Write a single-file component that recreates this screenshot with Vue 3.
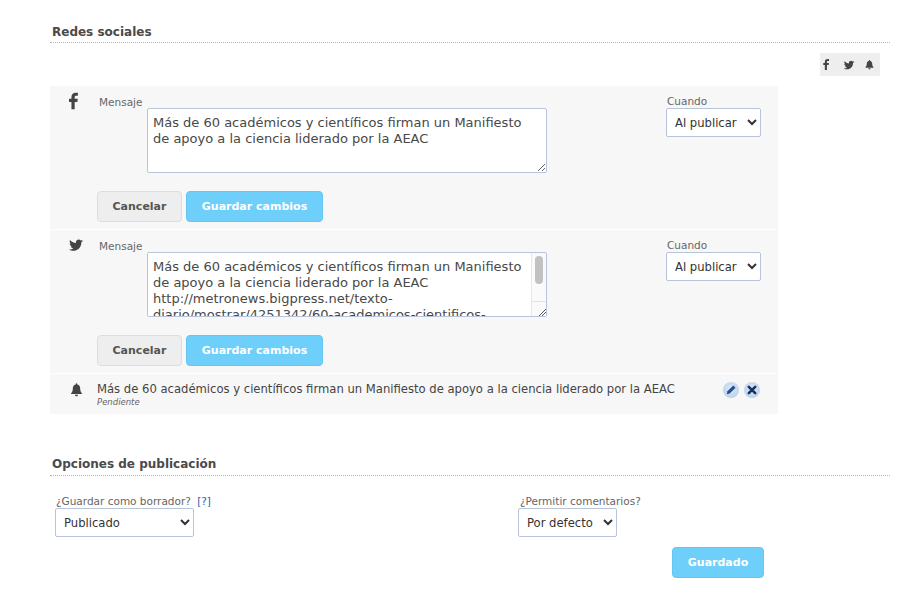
<script setup>
const msg1 = 'Más de 60 académicos y científicos firman un Manifiesto de apoyo a la ciencia liderado por la AEAC'
const msg2 = msg1 + ' http://metronews.bigpress.net/texto-diario/mostrar/4251342/60-academicos-cientificos-firman-manifiesto-apoyo-ciencia-liderado-aeac'
const rows = [
  { id: 'fb', text: msg1, scroll: false },
  { id: 'tw', text: msg2, scroll: true }
]
const fb = 'M10.6 1.5c-2.5 0-3.9 1.4-3.9 3.9V7H4.5v2.8h2.2v6.7h2.9V9.8h2.4l.4-2.8H9.6V5.6c0-.9.3-1.4 1.4-1.4h1.5V1.6c-.4 0-1.1-.1-1.9-.1z'
const tw = 'M17 4.3c-.6.3-1.2.4-1.9.5.7-.4 1.2-1 1.4-1.8-.6.4-1.3.6-2.1.8-.6-.6-1.4-1-2.3-1-1.8 0-3.2 1.4-3.2 3.2 0 .3 0 .5.1.7C6.3 6.6 3.9 5.3 2.3 3.400c-.3.5-.4 1-.4 1.600 0 1.100.6 2.100 1.400 2.700-.5 0-1-.2-1.400-.4 0 1.600 1.100 2.900 2.500 3.200-.3.100-.5.100-.8.100-.2 0-.4 0-.6-.1.4 1.300 1.600 2.200 3 2.200-1.100.9-2.500 1.400-4 1.400H1c1.400.9 3.100 1.400 4.900 1.400 5.900 0 9.100-4.900 9.100-9.100v-.4c.8-.5 1.500-1.200 2-2z'
const bell = 'M9 1.500c-.6 0-1 .4-1 1v.6C5.800 3.600 4.600 5.400 4.600 7.500c0 3.500-1 4.800-2.100 6v.9h13v-.9c-1.100-1.200-2.100-2.500-2.100-6 0-2.100-1.200-3.900-3.400-4.400v-.6c0-.6-.4-1-1-1zM7 15.200c0 1.100.9 1.800 2 1.800s2-.7 2-1.800H7z'
</script>

<template>
  <main class="page">
    <h2 class="heading">Redes sociales</h2>

    <div class="toggles">
      <span class="toggle t-fb"><svg viewBox="0 0 18 18" width="13" height="13"><path :d="fb" /></svg></span>
      <span class="toggle t-tw"><svg viewBox="0 0 18 18" width="12" height="12"><path :d="tw" /></svg></span>
      <span class="toggle t-bell"><svg viewBox="0 0 18 18" width="11" height="11"><path :d="bell" /></svg></span>
    </div>

    <section class="panel">
      <div v-for="r in rows" :key="r.id" class="row">
        <div class="net-icon" :class="r.id">
          <svg v-if="r.id === 'fb'" viewBox="0 0 18 18" width="20" height="20"><path :d="fb" /></svg>
          <svg v-else viewBox="0 0 18 18" width="16" height="16"><path :d="tw" /></svg>
        </div>
        <div class="form">
          <div class="msg-line">
            <label class="label msg-label">Mensaje</label>
            <div class="area-wrap">
              <textarea class="area" :class="{ scrolling: r.scroll }" :value="r.text"></textarea>
              <div v-if="r.scroll" class="fake-bar">
                <span class="fake-thumb"></span>
                <span class="fake-corner"></span>
              </div>
            </div>
          </div>
          <div class="actions">
            <button class="btn cancel">Cancelar</button>
            <button class="btn primary">Guardar cambios</button>
          </div>
        </div>
        <div class="when">
          <label class="label when-label">Cuando</label>
          <select class="select"><option>Al publicar</option></select>
        </div>
      </div>

      <div class="row pending">
        <div class="bell-icon"><svg viewBox="0 0 18 18" width="15" height="15"><path :d="bell" /></svg></div>
        <div class="pending-text">
          <div class="pending-msg">{{ msg1 }}</div>
          <div class="pending-state">Pendiente</div>
        </div>
        <div class="round-actions">
          <span class="round">
            <svg viewBox="0 0 16 16" width="16" height="16"><path d="M10.300 3.500l2.200 2.200-5.800 5.800-2.900.7.700-2.900z" fill="#1f4f8f" /></svg>
          </span>
          <span class="round">
            <svg viewBox="0 0 16 16" width="16" height="16"><path d="M4.800 4.800l6.400 6.400M11.200 4.800l-6.400 6.400" stroke="#16345f" stroke-width="2.600" stroke-linecap="round" /></svg>
          </span>
        </div>
      </div>
    </section>

    <h2 class="heading second">Opciones de publicación</h2>

    <div class="options">
      <div class="opt-left">
        <label class="label">¿Guardar como borrador? <a class="help">[?]</a></label>
        <select class="select wide"><option>Publicado</option></select>
      </div>
      <div class="opt-right">
        <label class="label">¿Permitir comentarios?</label>
        <select class="select"><option>Por defecto</option></select>
      </div>
    </div>

    <div class="save">
      <button class="btn primary saved">Guardado</button>
    </div>
  </main>
</template>

<style scoped>
.page {
  width: 924px;
  height: 605px;
  box-sizing: border-box;
  padding: 25px 34px 0 50px;
  font-family: "DejaVu Sans", Verdana, sans-serif;
  color: #444;
  overflow: hidden;
}
.heading {
  margin: 0;
  padding: 0 0 3px 2px;
  font-size: 12px;
  line-height: 14px;
  font-weight: 700;
  color: #4a4a4a;
  border-bottom: 1px dotted #b5b5b5;
}
.toggles {
  display: flex;
  justify-content: flex-end;
  margin: 10px 10px 10px 0;
}
.toggle {
  width: 20px;
  height: 23px;
  background: #eee;
  display: flex;
  align-items: center;
  justify-content: center;
}
.t-fb svg { margin-right: 7px; }
.t-tw svg { margin-right: 2px; }
.t-bell svg { margin-right: 2px; }
.toggle path, .net-icon path, .bell-icon path { fill: #444; }
.panel {
  width: 728px;
}
.row {
  display: flex;
  background: #f7f7f7;
  height: 143px;
  margin-bottom: 1px;
  box-sizing: border-box;
  position: relative;
}
.net-icon {
  width: 47px;
  box-sizing: border-box;
}
.net-icon.fb { padding: 5px 0 0 14px; }
.net-icon.tw { padding: 7px 0 0 18px; }
.form { width: 569px; }
.msg-line {
  display: flex;
  padding-top: 10px;
}
.label {
  display: block;
  font-size: 10.500px;
  line-height: 12px;
  color: #666;
}
.msg-label { width: 50px; padding-left: 2px; box-sizing: border-box; flex: none; }
.when-label { padding-left: 1px; margin-bottom: 1px; }
.area-wrap {
  position: relative;
  margin-top: 12px;
}
.area {
  display: block;
  width: 400px;
  height: 65px;
  box-sizing: border-box;
  padding: 6px 5px;
  border: 1px solid #b7c4dc;
  border-radius: 2px;
  background: #fff;
  font-family: inherit;
  font-size: 13px;
  line-height: 16px;
  color: #484848;
  overflow: auto;
  outline: none;
}
.area.scrolling { padding-right: 19px; }
.fake-bar {
  position: absolute;
  top: 1px;
  right: 1px;
  bottom: 1px;
  width: 14px;
  background: #fafafa;
  border-left: 1px solid #e8e8e8;
  pointer-events: none;
}
.fake-thumb {
  position: absolute;
  top: 3px;
  left: 3px;
  width: 8px;
  height: 28px;
  border-radius: 4px;
  background: #c1c1c1;
}
.fake-corner {
  position: absolute;
  left: 0;
  right: 0;
  bottom: 0;
  height: 15px;
  box-sizing: border-box;
  border-top: 1px solid #e3e3e3;
  background:
    linear-gradient(135deg, transparent 0 72%, #555 72% 76%, transparent 76% 84%, #555 84% 88%, transparent 88%);
}
.actions {
  display: flex;
  gap: 4px;
  margin-top: 18px;
}
.btn {
  font-family: inherit;
  font-size: 11px;
  font-weight: 700;
  height: 31px;
  padding: 0;
  border-radius: 4px;
  cursor: pointer;
}
.cancel {
  width: 85px;
  background: #eee;
  border: 1px solid #ddd;
  color: #555;
}
.primary {
  width: 137px;
  background: #6fcffb;
  border: 1px solid #66c6f3;
  color: #fff;
}
.when {
  padding: 9px 0 0 0;
}
.select {
  display: block;
  height: 29px;
  box-sizing: border-box;
  padding: 0 4px;
  font-family: inherit;
  font-size: 11.600px;
  color: #333;
  background: #fff;
  border: 1px solid #b7c4dc;
  border-radius: 2px;
}
.when .select { width: 95px; }
.pending {
  height: 40px;
  margin: 0;
  align-items: flex-start;
}
.bell-icon {
  width: 47px;
  padding: 8px 0 0 19px;
  box-sizing: border-box;
}
.pending-text { width: 626px; padding-top: 8px; }
.pending-msg { font-size: 11.600px; line-height: 15px; color: #444; }
.pending-state { font-size: 8.500px; line-height: 10px; font-style: italic; color: #666; }
.round-actions { display: flex; gap: 5px; padding-top: 8px; }
.round {
  width: 16px;
  height: 16px;
  border-radius: 50%;
  background: radial-gradient(circle at 50% 40%, #dce8f6, #b3cbe6);
}
.second { margin-top: 43px; padding-bottom: 4px; }
.options {
  display: flex;
  margin-top: 19px;
  padding-left: 5px;
}
.options .label { padding-left: 1px; margin-bottom: 1px; }
.opt-left { width: 463px; }
.wide { width: 139px; }
.opt-right .label { padding-left: 2px; }
.opt-right .select { width: 99px; }
.help { color: #2a62a5; margin-left: 3px; }
.save {
  display: flex;
  justify-content: flex-end;
  margin: 10px 126px 0 0;
}
.saved { width: 92px; }
</style>
